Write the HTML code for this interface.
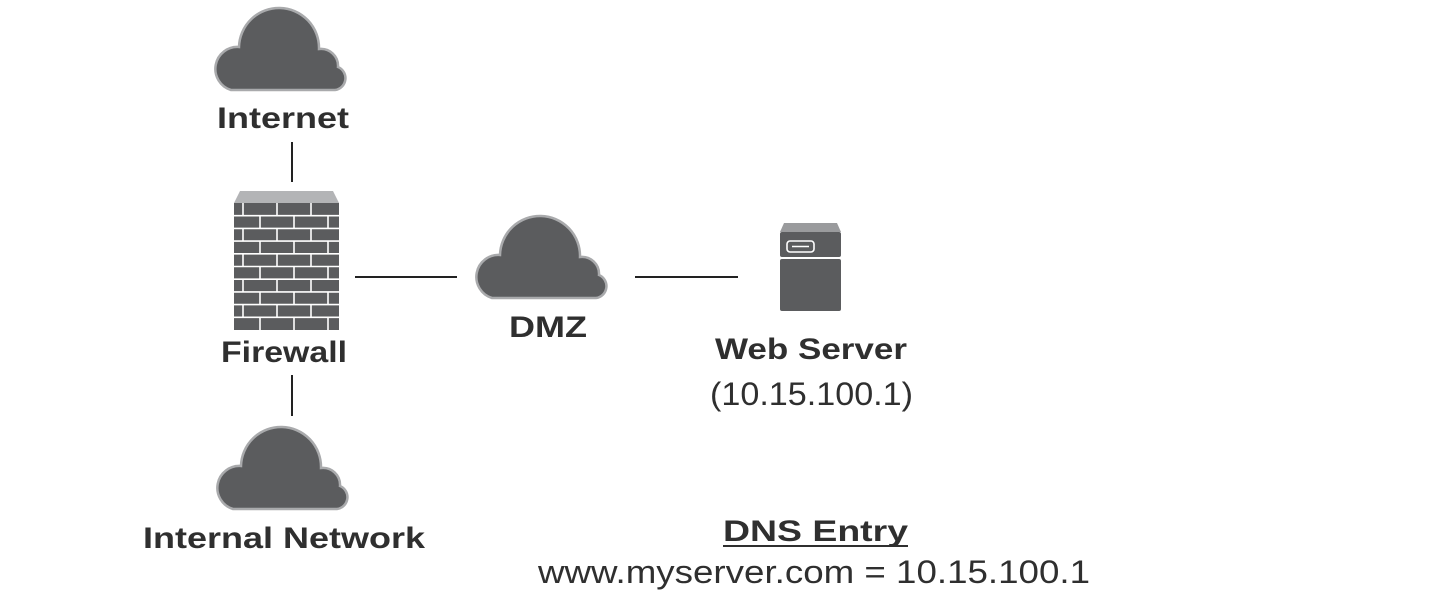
<!DOCTYPE html>
<html><head><meta charset="utf-8"><style>
html,body{margin:0;padding:0;background:#fff;width:1446px;height:600px;overflow:hidden}
svg{display:block}
text{font-family:"Liberation Sans",sans-serif;fill:#2f2f2f}
.b{font-weight:bold;font-size:30px}
.n{font-size:32px}
</style></head><body>
<svg width="1446" height="600" viewBox="0 0 1446 600">
<defs>
<path id="cloud" d="M20,85 A22,22 0 0 1 28,42 A40,40 0 0 1 108,44 A17,17 0 0 1 127,62 A12,12 0 0 1 124,85 Z" fill="#5b5c5e" stroke="#a9aaac" stroke-width="2.5"/>
</defs>
<use href="#cloud" x="211" y="5"/>
<use href="#cloud" x="472" y="213"/>
<use href="#cloud" x="213" y="424"/>
<g stroke="#222" stroke-width="2">
<line x1="292" y1="142" x2="292" y2="182"/>
<line x1="292" y1="375" x2="292" y2="416"/>
<line x1="355" y1="277" x2="457" y2="277"/>
<line x1="635" y1="277" x2="738" y2="277"/>
</g>
<polygon points="240,191 333,191 339,203 234,203" fill="#b3b4b6"/>
<rect x="234" y="203" width="105" height="127" fill="#5b5c5e"/>
<g stroke="#fff" stroke-width="1.6">
<line x1="234" y1="215.7" x2="339" y2="215.7"/>
<line x1="234" y1="228.4" x2="339" y2="228.4"/>
<line x1="234" y1="241.1" x2="339" y2="241.1"/>
<line x1="234" y1="253.8" x2="339" y2="253.8"/>
<line x1="234" y1="266.5" x2="339" y2="266.5"/>
<line x1="234" y1="279.2" x2="339" y2="279.2"/>
<line x1="234" y1="291.9" x2="339" y2="291.9"/>
<line x1="234" y1="304.6" x2="339" y2="304.6"/>
<line x1="234" y1="317.3" x2="339" y2="317.3"/>
<path d="M243,203v12.7M277,203v12.7M311,203v12.7
M260,215.7v12.7M294,215.7v12.7M328,215.7v12.7
M243,228.4v12.7M277,228.4v12.7M311,228.4v12.7
M260,241.1v12.7M294,241.1v12.7M328,241.1v12.7
M243,253.8v12.7M277,253.8v12.7M311,253.8v12.7
M260,266.5v12.7M294,266.5v12.7M328,266.5v12.7
M243,279.2v12.7M277,279.2v12.7M311,279.2v12.7
M260,291.9v12.7M294,291.9v12.7M328,291.9v12.7
M243,304.6v12.7M277,304.6v12.7M311,304.6v12.7
M260,317.3v12.7M294,317.3v12.7M328,317.3v12.7"/>
</g>
<polygon points="784,223 837,223 841,232 780,232" fill="#9a9b9d"/>
<rect x="780" y="232" width="61" height="25" rx="2" fill="#5b5c5e"/>
<rect x="780" y="259" width="61" height="52" rx="2" fill="#5b5c5e"/>
<rect x="787" y="241" width="27" height="11" rx="3" fill="none" stroke="#fff" stroke-width="1.6"/>
<line x1="792" y1="246.5" x2="809" y2="246.5" stroke="#fff" stroke-width="1.6"/>
<text class="b" x="217" y="128" textLength="132" lengthAdjust="spacingAndGlyphs">Internet</text>
<text class="b" x="221" y="362" textLength="126" lengthAdjust="spacingAndGlyphs">Firewall</text>
<text class="b" x="509" y="337" textLength="78" lengthAdjust="spacingAndGlyphs">DMZ</text>
<text class="b" x="715" y="359" textLength="192" lengthAdjust="spacingAndGlyphs">Web Server</text>
<text class="n" x="710" y="405" textLength="203" lengthAdjust="spacingAndGlyphs">(10.15.100.1)</text>
<text class="b" x="143" y="548" textLength="282" lengthAdjust="spacingAndGlyphs">Internal Network</text>
<text class="b" x="723" y="541" textLength="185" lengthAdjust="spacingAndGlyphs">DNS Entry</text>
<line x1="723" y1="546" x2="908" y2="546" stroke="#2f2f2f" stroke-width="2"/>
<text class="n" x="538" y="583" textLength="552" lengthAdjust="spacingAndGlyphs">www.myserver.com = 10.15.100.1</text>
</svg>
</body></html>
